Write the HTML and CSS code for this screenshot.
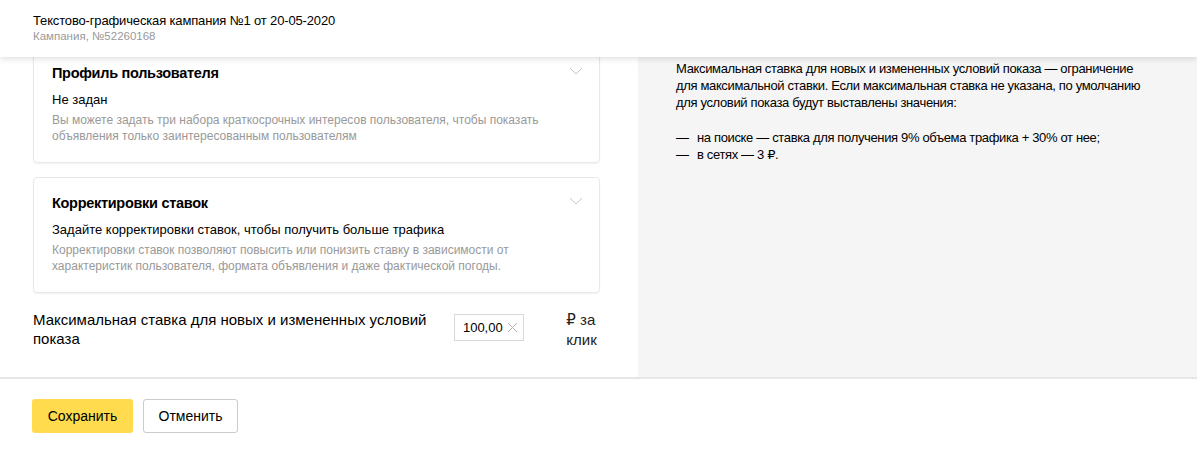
FILE: index.html
```html
<!DOCTYPE html>
<html lang="ru">
<head>
<meta charset="UTF-8">
<title>Текстово-графическая кампания №1</title>
<link rel="stylesheet" href="styles.css">
</head>
<body>
  <div class="header">
    <div class="header-title">Текстово-графическая кампания №1 от 20-05-2020</div>
    <div class="header-sub">Кампания, №52260168</div>
  </div>

  <div class="main">
    <div class="left-col">
      <div class="card card-first">
        <div class="card-head">
          <div class="card-title">Профиль пользователя</div>
          <svg class="chevron" width="14" height="8" viewBox="0 0 14 8"><path d="M1 1l6 6 6-6" fill="none" stroke="#c8c8c8" stroke-width="1"/></svg>
        </div>
        <div class="card-value">Не задан</div>
        <div class="card-hint">Вы можете задать три набора краткосрочных интересов пользователя, чтобы показать объявления только заинтересованным пользователям</div>
      </div>

      <div class="card">
        <div class="card-head">
          <div class="card-title">Корректировки ставок</div>
          <svg class="chevron" width="14" height="8" viewBox="0 0 14 8"><path d="M1 1l6 6 6-6" fill="none" stroke="#c8c8c8" stroke-width="1"/></svg>
        </div>
        <div class="card-value">Задайте корректировки ставок, чтобы получить больше трафика</div>
        <div class="card-hint">Корректировки ставок позволяют повысить или понизить ставку в зависимости от характеристик пользователя, формата объявления и даже фактической погоды.</div>
      </div>

      <div class="bid-row">
        <div class="bid-label">Максимальная ставка для новых и измененных условий показа</div>
        <div class="bid-input">
          <span>100,00</span>
          <svg width="11" height="11" viewBox="0 0 11 11"><path d="M1 1l9 9M10 1l-9 9" stroke="#b3b3b3" stroke-width="1"/></svg>
        </div>
        <div class="bid-unit">₽ за клик</div>
      </div>
    </div> <!-- End of .left-col -->

    <div class="side-help">
      <p>Максимальная ставка для новых и измененных условий показа — ограничение для максимальной ставки. Если максимальная ставка не указана, по умолчанию для условий показа будут выставлены значения:</p>
      <ul>
        <li><span class="dash">—</span>на поиске — ставка для получения 9% объема трафика + 30% от нее;</li>
        <li><span class="dash">—</span>в сетях — 3 ₽.</li>
      </ul>
    </div>
  </div> <!-- End of .main -->

  <div class="footer">
    <button class="btn btn-save">Сохранить</button>
    <button class="btn btn-cancel">Отменить</button>
  </div>
</body>
</html>
```

FILE: styles.css
```css
body {
  margin: 0;
  font-family: "Liberation Sans", Arial, "DejaVu Sans", sans-serif;
  color: #000;
  background-color: #fff;
  width: 1197px;
}

.header {
  position: relative;
  z-index: 2;
  height: 57px;
  box-sizing: border-box;
  padding: 12px 33px 0;
  background-color: #fff;
  box-shadow: 0 2px 6px rgba(0, 0, 0, 0.12);
}

.header-title {
  font-size: 13px;
  line-height: 17px;
  letter-spacing: -0.15px;
}

.header-sub {
  font-size: 11.5px;
  line-height: 14px;
  color: #999;
}

.main {
  display: flex;
  height: 320px;
  border-bottom: 2px solid #e6e6e6;
}

.left-col {
  width: 638px;
  box-sizing: border-box;
  padding: 0 38px 0 33px;
  overflow: hidden;
}

.card {
  border: 1px solid #e8e8e8;
  border-radius: 4px;
  box-shadow: 0 1px 2px rgba(0, 0, 0, 0.06);
  padding: 15px 18px 18px;
  margin-bottom: 14px;
}

.card-first {
  margin-top: -10px; /* top of the card is scrolled under the header */
}

.card-head {
  display: flex;
  justify-content: space-between;
  align-items: flex-start;
}

.card-title {
  font-size: 14.5px;
  line-height: 20px;
  font-weight: bold;
  letter-spacing: -0.3px;
}

.chevron {
  margin-top: 4px;
  margin-right: -2px;
}

.card-value {
  font-size: 13px;
  line-height: 18px;
  margin-top: 8px;
}

.card-hint {
  font-size: 12px;
  line-height: 16px;
  color: #999;
  margin-top: 3px;
  padding-right: 30px;
}

.bid-row {
  display: flex;
  align-items: flex-start;
  padding-top: 3px;
}

.bid-label {
  width: 400px;
  font-size: 15px;
  line-height: 19px;
  margin-right: 23px;
}

.bid-input {
  display: flex;
  align-items: center;
  justify-content: space-between;
  width: 71px;
  height: 27px;
  box-sizing: border-box;
  border: 1px solid #d9d9d9;
  padding: 0 5px 0 8px;
  margin-top: 4px;
  margin-left: 2px;
  font-size: 13px;
}

.bid-unit {
  width: 34px;
  margin-left: 42px;
  font-size: 15px;
  line-height: 20px;
  color: #222;
}

.side-help {
  flex: 1;
  background-color: #f5f5f5;
  padding: 3px 38px 0;
  font-size: 13px;
  line-height: 17px;
  letter-spacing: -0.35px;
}

.side-help p {
  margin: 0 0 18px;
  padding-right: 10px;
}

.side-help ul {
  list-style: none;
  margin: 0;
  padding: 0;
}

.dash {
  display: inline-block;
  width: 21px;
}

.footer {
  padding: 20px 32px;
  display: flex;
  gap: 10px;
}

.btn {
  height: 34px;
  font-family: "Liberation Sans", Arial, sans-serif;
  font-size: 14px;
  border-radius: 3px;
  cursor: pointer;
  color: #000;
}

.btn-save {
  width: 101px;
  background-color: #ffdb4d;
  border: none;
}

.btn-cancel {
  width: 95px;
  background-color: #fff;
  border: 1px solid #ccc;
}
```
